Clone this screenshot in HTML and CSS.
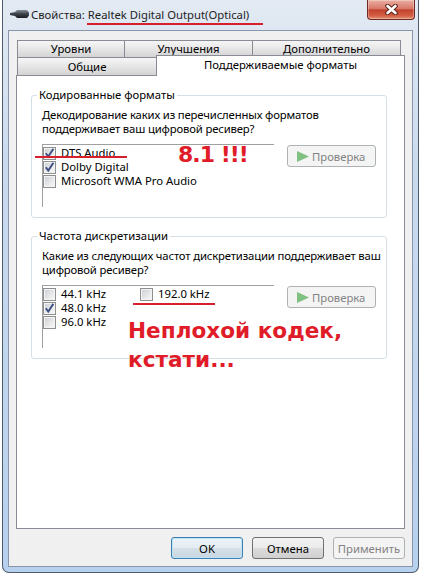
FILE: index.html
```html
<!DOCTYPE html>
<html lang="ru">
<head>
  <meta charset="UTF-8">
  <meta name="viewport" content="width=device-width, initial-scale=1.0">
  <title>Свойства: Realtek Digital Output(Optical)</title>
  <link rel="stylesheet" href="styles.css">
</head>
<body>
  <div class="window">
    <div class="titlebar">
      <svg class="app-icon" width="19" height="8" viewBox="0 0 19 8">
        <defs>
          <linearGradient id="plug" x1="0" y1="0" x2="0" y2="1">
            <stop offset="0" stop-color="#8a9099"/>
            <stop offset="0.5" stop-color="#3b4048"/>
            <stop offset="1" stop-color="#1c1f24"/>
          </linearGradient>
        </defs>
        <path d="M0 3 L5 2 L7 0 L17 0 L19 2.5 L19 5.5 L17 8 L7 8 L5 6 L0 5 Z" fill="url(#plug)"/>
      </svg>
      <span class="caption">Свойства: Realtek Digital Output(Optical)</span>
      <div class="close-btn">
        <svg width="15" height="11" viewBox="0 0 15 11">
          <path d="M3.5 2 L11.5 9 M11.5 2 L3.5 9" stroke="#5b241b" stroke-width="4.6" stroke-linecap="round"/>
          <path d="M3.5 2 L11.5 9 M11.5 2 L3.5 9" stroke="#fff" stroke-width="2.6" stroke-linecap="round"/>
        </svg>
      </div>
      <div class="strike strike-title"></div>
    </div>

    <div class="client">
      <div class="tabs">
        <div class="tab-row">
          <div class="tab w-levels">Уровни</div>
          <div class="tab w-effects">Улучшения</div>
          <div class="tab w-advanced">Дополнительно</div>
        </div>
        <div class="tab-row front">
          <div class="tab w-general">Общие</div>
          <div class="tab active w-formats">Поддерживаемые форматы</div>
        </div>
      </div>

      <div class="page">
        <fieldset class="group">
          <legend>Кодированные форматы</legend>
          <p class="hint">Декодирование каких из перечисленных форматов<br>поддерживает ваш цифровой ресивер?</p>
          <div class="group-body">
            <div class="list">
              <div class="item">
                <span class="check"><svg width="11" height="11" viewBox="0 0 11 11"><path d="M1.8 5.2 L4.3 8.6 L9.4 0.8" fill="none" stroke="#3e4f84" stroke-width="1.9"/></svg></span>DTS Audio
              </div>
              <div class="item">
                <span class="check"><svg width="11" height="11" viewBox="0 0 11 11"><path d="M1.8 5.2 L4.3 8.6 L9.4 0.8" fill="none" stroke="#3e4f84" stroke-width="1.9"/></svg></span>Dolby Digital
              </div>
              <div class="item"><span class="check"></span>Microsoft WMA Pro Audio</div>
            </div>
            <button class="test-btn" disabled>
              <svg width="12" height="11" viewBox="0 0 12 11"><path d="M0 0 L12 5.5 L0 11 Z" fill="#80c080"/></svg>
              Проверка
            </button>
          </div>
        </fieldset>

        <fieldset class="group second">
          <legend>Частота дискретизации</legend>
          <p class="hint">Какие из следующих частот дискретизации поддерживает ваш<br>цифровой ресивер?</p>
          <div class="group-body">
            <div class="list columns">
              <div class="item"><span class="check"></span>44.1 kHz</div>
              <div class="item">
                <span class="check"><svg width="11" height="11" viewBox="0 0 11 11"><path d="M1.8 5.2 L4.3 8.6 L9.4 0.8" fill="none" stroke="#3e4f84" stroke-width="1.9"/></svg></span>48.0 kHz
              </div>
              <div class="item"><span class="check"></span>96.0 kHz</div>
              <div class="item"><span class="check"></span>192.0 kHz</div>
            </div>
            <button class="test-btn" disabled>
              <svg width="12" height="11" viewBox="0 0 12 11"><path d="M0 0 L12 5.5 L0 11 Z" fill="#80c080"/></svg>
              Проверка
            </button>
          </div>
        </fieldset>

        <!-- red marker notes drawn on top -->
        <div class="strike strike-dts"></div>
        <div class="strike strike-192"></div>
        <div class="note note-81">8.1 !!!</div>
        <div class="note note-codec">Неплохой кодек,<br>кстати...</div>
      </div>

      <div class="buttons">
        <button class="btn default">OK</button>
        <button class="btn">Отмена</button>
        <button class="btn" disabled>Применить</button>
      </div>
    </div>
  </div>
</body>
</html>
```

FILE: styles.css
```css
* {
  box-sizing: border-box;
}

body {
  margin: 0;
  background: #fff;
  font-family: "Noto Sans", "DejaVu Sans", sans-serif;
  font-size: 11.3px;
  color: #000;
}

.window {
  margin-left: 2px;
  width: 417px;
  height: 573px;
  padding: 0 5px 5px;
  border: 1px solid #4d5b6c;
  border-top: 0;
  border-radius: 0 0 7px 7px;
  background: linear-gradient(#e3eaf3, #cbdbee 160px, #b7d0ee);
  display: flex;
  flex-direction: column;
}

/* title bar */
.titlebar {
  height: 30px;
  position: relative;
  display: flex;
  align-items: flex-start;
}

.app-icon {
  margin: 10px 0 0 2px;
  flex: none;
}

.caption {
  margin: 7px 0 0 2px;
  line-height: 16px;
  color: #1e1e1e;
  white-space: nowrap;
}

.close-btn {
  margin-left: auto;
  margin-right: -2px;
  width: 48px;
  height: 20px;
  border: 1px solid #6b2a22;
  border-top: 0;
  border-radius: 0 0 4px 4px;
  background: linear-gradient(#eab0a2, #d9786a 45%, #c2432e 52%, #d25a40 80%, #e69070);
  box-shadow: inset 0 0 0 1px rgba(255, 255, 255, 0.3);
  display: flex;
  justify-content: center;
  align-items: center;
}

/* client area */
.client {
  flex: 1;
  border: 1px solid #8796aa;
  background: #f0f0f0;
  padding: 9px 7px 0;
  display: flex;
  flex-direction: column;
}

.tab-row {
  display: flex;
  height: 17px;
  padding-left: 1px;
}

.tab-row.front {
  height: 18px;
  align-items: flex-start;
}

.tab {
  height: 100%;
  border: 1px solid #898c95;
  border-bottom: 0;
  background: linear-gradient(#f6f6f6, #e4e4e4 55%, #d3d3d3);
  text-align: center;
  line-height: 16px;
  white-space: nowrap;
}

.tab + .tab {
  margin-left: -1px;
}

.w-levels { width: 108px; }
.w-effects { width: 129px; }
.w-advanced { width: 149px; }
.w-general { width: 140px; line-height: 17px; }

.tab.active {
  width: 249px;
  height: 21px;
  margin-top: -2px;
  background: #fff;
  line-height: 18px;
  position: relative;
  z-index: 1;
}

.page {
  height: 454px;
  flex: none;
  border: 1px solid #898c95;
  background: #fff;
  position: relative;
  padding: 11px 17px 0 14px;
}

/* group boxes */
.group {
  margin: 0;
  min-width: 0;
  border: 1px solid #d5dfe5;
  border-radius: 3px;
  padding: 0 10px 10px;
}

.group.second {
  margin-top: 10px;
}

.group legend {
  padding: 0 2px;
  margin-left: -5px;
  line-height: 16px;
}

.hint {
  margin: 5px 0 0;
  line-height: 14px;
  letter-spacing: -0.15px;
  white-space: nowrap;
}

.group-body {
  display: flex;
  align-items: flex-start;
  margin-top: 8px;
}

.list {
  width: 232px;
  height: 63px;
  flex: none;
  border-top: 1px solid #a0a0a0;
  border-left: 1px solid #a0a0a0;
  padding-top: 1px;
}

.list.columns {
  display: grid;
  grid-template-rows: repeat(3, 14px);
  grid-auto-flow: column;
  grid-auto-columns: 97px;
  align-content: start;
}

.item {
  display: flex;
  align-items: center;
  gap: 5px;
  height: 14px;
  line-height: 14px;
  white-space: nowrap;
}

.check {
  width: 13px;
  height: 13px;
  flex: none;
  border: 1px solid #8e8f8f;
  background: linear-gradient(135deg, #c9cdd3, #eeeeee 70%, #f8f8f8);
  box-shadow: inset 0 0 0 1px #f4f4f4;
  display: flex;
  justify-content: center;
  align-items: center;
}

.test-btn {
  margin: 1px 0 0 13px;
  width: 89px;
  height: 22px;
  border: 1px solid #adb2b5;
  border-radius: 3px;
  background: #f4f4f4;
  color: #838383;
  font: inherit;
  display: flex;
  align-items: center;
  gap: 3px;
  padding: 0 0 0 9px;
}

/* dialog buttons */
.buttons {
  display: flex;
  justify-content: flex-end;
  gap: 9px;
  margin-top: 8px;
}

.btn {
  width: 72px;
  height: 22px;
  padding: 0;
  border: 1px solid #707070;
  border-radius: 3px;
  background: linear-gradient(#f2f2f2, #ebebeb 50%, #dddddd 51%, #cfcfcf);
  font: inherit;
  color: #000;
}

.btn.default {
  border-color: #3c7fb1;
  background: linear-gradient(#eef4f8, #e3ecf2 50%, #d5e0e8 51%, #c9d6e0);
  box-shadow: inset 0 0 0 1px #bfe3f6;
}

.btn:disabled {
  border-color: #adb2b5;
  background: #f4f4f4;
  color: #838383;
}

/* red marker notes */
.strike {
  position: absolute;
  height: 2px;
  background: #d6202b;
}

.strike-title { left: 79px; top: 23px; width: 176px; }
.strike-dts { left: 18px; top: 80px; width: 92px; }
.strike-192 { left: 116px; top: 227px; width: 82px; }

.note {
  position: absolute;
  color: #e01c28;
  font-family: "DejaVu Sans", sans-serif;
  font-weight: bold;
  font-size: 21.6px;
  white-space: nowrap;
}

.note-81 {
  left: 161px;
  top: 68px;
  font-size: 22px;
  line-height: 22px;
  letter-spacing: -1px;
}

.note-codec {
  left: 111px;
  top: 240px;
  line-height: 29px;
}
```
